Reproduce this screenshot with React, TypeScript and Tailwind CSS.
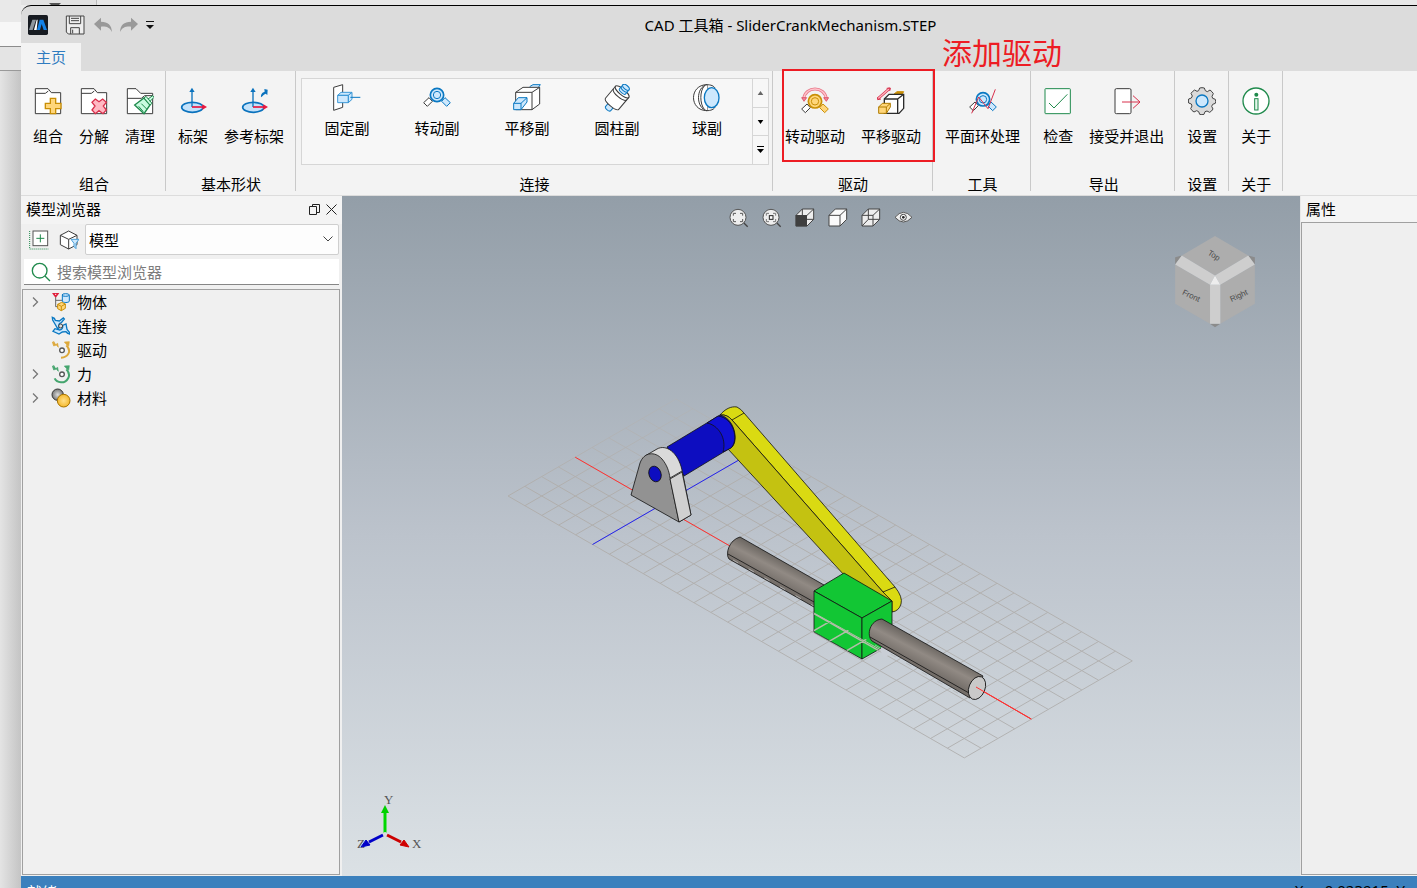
import React from "react";

type IconProps = { children: React.ReactNode; box?: number; className?: string };

function Glyph({ children, box = 84, className = "size-7" }: IconProps) {
  return (
    <svg viewBox={`0 0 ${box} ${box}`} className={className} fill="none" strokeWidth={3} aria-hidden="true">
      {children}
    </svg>
  );
}

const INK = "#3c3c3c";
const BLUE = "#0a78c2";
const SKY = "#cde8fd";
const GREEN = "#1f8a4c";
const ROSE = "#d8304c";
const GOLD = "#c98f06";
const AMBER = "#ffd67a";

function Folder() {
  return (
    <>
      <path d="M4 80V5H42L52 17H80V80Z" fill="#fff" stroke={INK} />
      <path d="M4 19H34L43 12" stroke={INK} />
    </>
  );
}

const combineIcon = (
  <Glyph>
    <Folder />
    <path d="M49 34H65V49H81V65H65V80H49V65H34V49H49Z" fill={AMBER} stroke={GOLD} strokeWidth="4" />
  </Glyph>
);

const explodeIcon = (
  <Glyph>
    <Folder />
    <path d="M46 36L57 44L68 36L79 46L70 57L79 69L69 80L57 71L46 80L36 69L45 57L36 46Z" fill="#ffb9c3" stroke={ROSE} strokeWidth="4" />
  </Glyph>
);

const cleanIcon = (
  <Glyph>
    <path d="M4 80V5H30L44 19H80V80Z" fill="#fff" stroke={INK} />
    <path d="M4 34H46L56 26H80" stroke={INK} />
    <path d="M26 54L54 33L72 54L54 80Z" fill="#c9fbe0" stroke={GREEN} strokeWidth="4" />
    <path d="M54 33L60 28L78 49L72 54ZM66 36L80 26L84 31L72 43" fill="#c9fbe0" stroke={GREEN} />
    <path d="M38 58L52 74M46 50L62 66" stroke={GREEN} />
  </Glyph>
);

function FrameBase() {
  return (
    <>
      <ellipse cx="40" cy="61" rx="32" ry="15" fill="#c4e2fa" stroke="#0a72bd" strokeWidth="5" />
      <path d="M39 60V12" stroke="#0a72bd" strokeWidth="4" />
      <path d="M39 2L47 15H31Z" fill="#0a72bd" />
      <path d="M39 60H72" stroke="#e9173f" strokeWidth="5" />
      <path d="M70 52L84 60L70 68Z" fill="#e9173f" />
    </>
  );
}

const frameIcon = <Glyph><FrameBase /></Glyph>;
const refFrameIcon = (
  <Glyph>
    <FrameBase />
    <path d="M63 31C62 20 68 16 74 14L73 6L83 8L82 24L77 20C70 23 70 26 63 31Z" fill="#0a72bd" />
  </Glyph>
);

const fixedIcon = (
  <Glyph>
    <path d="M2 10L29 2V70L2 79Z" fill="#fff" stroke={INK} />
    <path d="M14 34L24 25H57L46 34Z M46 34L57 25V46L46 56Z M14 34H46V56H14Z" fill={SKY} stroke="#3d98d6" />
    <path d="M52 40H82" stroke={BLUE} />
  </Glyph>
);

function Hinge({ ring, tint }: { ring: string; tint: string }) {
  return (
    <>
      <path d="M2 56L18 41L28 52L13 67Z" fill="#fff" stroke={INK} />
      <path d="M82 56L66 41L56 52L71 67Z" fill={tint} stroke={ring} />
      <circle cx="42" cy="33" r="20" fill={tint} stroke={ring} strokeWidth="5" />
      <circle cx="42" cy="33" r="11" fill={tint} stroke={ring} />
    </>
  );
}

const hingeIcon = <Glyph><Hinge ring={BLUE} tint={SKY} /></Glyph>;

const slideIcon = (
  <Glyph>
    <path d="M50 8L60 2H82L76 10" fill={SKY} stroke={BLUE} />
    <path d="M8 25L30 10H80V60L57 77H8Z" fill="#fff" stroke={INK} />
    <path d="M8 25H57V77M57 25L80 10" stroke={INK} />
    <path d="M2 58L16 41H42V54L24 77H2Z" fill={SKY} stroke={BLUE} />
    <path d="M2 58H24V77M24 58L42 41" stroke={BLUE} />
  </Glyph>
);

const cylinderIcon = (
  <Glyph>
    <g transform="rotate(40 42 42)">
      <path d="M32 62V83C32 90 52 90 52 83V62Z" fill={SKY} stroke={BLUE} />
      <path d="M16 18V64C16 76 68 76 68 64V18Z" fill="#fff" stroke={INK} />
      <ellipse cx="42" cy="18" rx="26" ry="9" fill="#fff" stroke={INK} />
      <path d="M16 28C20 40 64 40 68 28" stroke={INK} />
      <path d="M30 0V16C30 23 54 23 54 16V0Z" fill={SKY} stroke={BLUE} />
      <ellipse cx="42" cy="0" rx="12" ry="6" fill={SKY} stroke={BLUE} />
      <path d="M30 8C32 15 52 15 54 8" stroke={BLUE} />
    </g>
  </Glyph>
);

const ballIcon = (
  <Glyph>
    <path d="M42 2C-12 2 -12 80 42 80Z" fill="#fff" stroke={INK} />
    <path d="M42 2C8 8 8 74 42 80" fill="#fff" stroke={INK} />
    <path d="M40 2C55 2 62 6 66 12M40 80C55 80 62 76 66 70" stroke={INK} />
    <ellipse cx="56" cy="41" rx="22" ry="30" fill={SKY} stroke={BLUE} strokeWidth="4" />
    <path d="M34 6C20 20 20 60 34 76" stroke={INK} />
  </Glyph>
);

const rotaryDriveIcon = (
  <Glyph>
    <path d="M8 36C12 -4 72 -4 76 36" stroke="#e8798a" strokeWidth="9" />
    <path d="M8 36C12 -4 72 -4 76 36" stroke="#ffc4cc" strokeWidth="4" />
    <path d="M2 32H17L9 43ZM68 32H83L76 43Z" fill="#f08b9a" stroke={ROSE} strokeWidth="2" />
    <g transform="translate(0 10)"><Hinge ring={GOLD} tint={AMBER} /></g>
  </Glyph>
);

const linearDriveIcon = (
  <Glyph>
    <path d="M50 22L60 14H80L74 24" fill={GOLD} stroke={GOLD} />
    <path d="M22 36L36 22H80V64L66 79H22Z" fill="#fff" stroke="#2c2c2c" strokeWidth="4" />
    <path d="M22 36H62V79M62 36L80 22" stroke="#2c2c2c" strokeWidth="4" />
    <path d="M5 60L16 49H40V60L28 79H5Z" fill={AMBER} stroke="#b07c00" />
    <path d="M5 60H28V79M28 60L40 49" stroke="#b07c00" />
    <path d="M5 33L36 6" stroke={ROSE} strokeWidth="8" strokeLinecap="round" />
    <path d="M5 33L36 6" stroke="#ffb4be" strokeWidth="4" strokeLinecap="round" />
    <path d="M0 30L2 38L12 36M29 4L40 3L38 12" stroke={ROSE} />
  </Glyph>
);

const loopIcon = (
  <Glyph>
    <g transform="translate(0 4)"><Hinge ring={BLUE} tint={SKY} /></g>
    <path d="M8 79L29 30L57 65L79 7" stroke={ROSE} />
  </Glyph>
);

const checkIcon = (
  <Glyph>
    <rect x="3" y="5" width="76" height="75" rx="2" fill="#fff" stroke={GREEN} />
    <path d="M15 48L30 63L70 22" stroke={GREEN} />
  </Glyph>
);

const exitIcon = (
  <Glyph>
    <rect x="6" y="5" width="48" height="75" rx="4" fill="#fff" stroke={INK} />
    <path d="M27 45H81M60 26L81 45L60 64" stroke={ROSE} />
  </Glyph>
);

const gearIcon = (
  <Glyph>
    <path
      d="M32 11L35 3Q42 1 49 3L52 11L58 14L66 9Q73 14 76 20L72 28L74 34L82 37Q84 43 82 49L74 52L71 58L75 66Q71 73 65 76L57 72L51 74L48 82Q42 84 35 82L32 74L26 71L18 75Q11 71 8 65L12 57L10 51L2 48Q0 42 2 36L10 33L13 27L9 19Q14 12 20 9L27 13Z"
      fill="#dadada"
      stroke="#444"
    />
    <circle cx="42" cy="42" r="18" fill={SKY} stroke={BLUE} strokeWidth="4" />
  </Glyph>
);

const infoIcon = (
  <Glyph>
    <circle cx="42" cy="42" r="39" fill="#fff" stroke={GREEN} strokeWidth="4" />
    <circle cx="43" cy="23" r="6" fill={GREEN} />
    <rect x="38" y="35" width="10" height="34" fill="#e4f7ec" stroke={GREEN} />
  </Glyph>
);

function RibbonGroup({ label, children, tight }: { label: string; children: React.ReactNode; tight?: boolean }) {
  return (
    <section aria-label={label} className={`relative flex shrink-0 flex-col pb-px pl-1 ${tight ? "pr-[3px]" : "pr-1"}`}>
      <div className="flex flex-1">{children}</div>
      <div className="h-5 text-center leading-5">{label}</div>
      <span className="absolute top-0 right-0 bottom-1 w-px bg-[#c9c9c9]" />
    </section>
  );
}

function RibbonButton({ icon, label }: { icon: React.ReactNode; label: string }) {
  return (
    <button type="button" className="flex flex-col items-center gap-[11px] self-start px-2 pt-4 leading-5 whitespace-nowrap">
      {icon}
      <span>{label}</span>
    </button>
  );
}

const joints = [
  { label: "固定副", icon: fixedIcon },
  { label: "转动副", icon: hingeIcon },
  { label: "平移副", icon: slideIcon },
  { label: "圆柱副", icon: cylinderIcon },
  { label: "球副", icon: ballIcon },
];

function Gallery() {
  return (
    <div className="mt-[7px] ml-px flex h-[87px] w-[468px] border border-[#d6d6d6] bg-[#f7f7f7]">
      <div className="flex flex-1 items-start">
        {joints.map((j) => (
          <button key={j.label} type="button" className="flex w-[90px] flex-col items-center gap-1.5 pt-[5px] leading-5">
            {j.icon}
            <span>{j.label}</span>
          </button>
        ))}
      </div>
      <div className="flex w-[18px] flex-col divide-y divide-[#d6d6d6] border-l border-[#d6d6d6]">
        <button type="button" aria-label="向上滚动" className="flex flex-1 items-center justify-center">
          <svg viewBox="0 0 7 5" className="h-1 w-[7px]"><path d="M0 5L3.500 0L7 5Z" fill="#666" /></svg>
        </button>
        <button type="button" aria-label="向下滚动" className="flex flex-1 items-center justify-center">
          <svg viewBox="0 0 7 5" className="h-1 w-[7px]"><path d="M0 0L3.500 5L7 0Z" fill="#000" /></svg>
        </button>
        <button type="button" aria-label="展开" className="flex flex-1 items-center justify-center">
          <svg viewBox="0 0 7 8" className="h-2 w-[7px]"><path d="M0 0H7V1H0ZM0 3L3.500 7L7 3Z" fill="#000" /></svg>
        </button>
      </div>
    </div>
  );
}

function TitleBar() {
  return (
    <header className="flex h-[37px] shrink-0 items-center pl-[7px]">
      <svg viewBox="0 0 60 60" className="size-5 shrink-0" aria-hidden="true">
        <rect width="60" height="60" rx="5" fill="#171b21" />
        <path d="M3 45L13 14H24L14 45Z" fill="#8e969d" />
        <path d="M18 45L26 14H29L26 45Z" fill="#fff" />
        <path d="M27 45L35 14H46L57 45H47L41 27L36 45Z" fill="#1382e8" />
      </svg>
      <div className="ml-4 flex items-center gap-1">
        <button type="button" aria-label="保存" className="flex size-[22px] items-center justify-center">
          <svg viewBox="0 0 60 60" className="size-5" fill="none" stroke="#444" strokeWidth="3">
            <path d="M4 3H57V57H10L4 51Z" fill="#eee" />
            <path d="M13 3V26H47V3M18 10H42M18 17H42M17 57V38H43V57M23 44V55" />
          </svg>
        </button>
        <button type="button" aria-label="撤销" className="ml-0.5 flex size-[22px] items-center justify-center">
          <svg viewBox="0 0 60 48" className="h-4 w-5"><path d="M3 21L24 2V14C45 14 56 24 57 45C49 31 41 28 24 29V41Z" fill="#999" /></svg>
        </button>
        <button type="button" aria-label="重做" className="flex size-[22px] items-center justify-center">
          <svg viewBox="0 0 60 48" className="h-4 w-5"><path d="M57 21L36 2V14C15 14 4 24 3 45C11 31 19 28 36 29V41Z" fill="#999" /></svg>
        </button>
        <button type="button" aria-label="自定义快速访问工具栏" className="flex w-3 items-center justify-center">
          <svg viewBox="0 0 8 8" className="size-2"><path d="M0 0H8V1H0ZM0 4L4 8L8 4Z" fill="#111" /></svg>
        </button>
      </div>
      <h1 className="flex-1 pl-2 text-center leading-5">CAD 工具箱 - SliderCrankMechanism.STEP</h1>
    </header>
  );
}

function Ribbon() {
  return (
    <div className="flex h-[125px] shrink-0 border-b border-[#dcdcdc] bg-[#f3f3f3]">
      <RibbonGroup label="组合" tight>
        <RibbonButton icon={combineIcon} label="组合" />
        <RibbonButton icon={explodeIcon} label="分解" />
        <RibbonButton icon={cleanIcon} label="清理" />
      </RibbonGroup>
      <RibbonGroup label="基本形状">
        <RibbonButton icon={frameIcon} label="标架" />
        <RibbonButton icon={refFrameIcon} label="参考标架" />
      </RibbonGroup>
      <RibbonGroup label="连接">
        <Gallery />
      </RibbonGroup>
      <RibbonGroup label="驱动">
        <RibbonButton icon={rotaryDriveIcon} label="转动驱动" />
        <RibbonButton icon={linearDriveIcon} label="平移驱动" />
        <span className="pointer-events-none absolute -top-0.5 -right-0.5 left-[9px] z-10 h-[93px] border-2 border-[#ed1c24]" />
        <span className="pointer-events-none absolute -top-9 left-[169px] z-10 text-[30px] leading-9 whitespace-nowrap text-[#ed1c24]">添加驱动</span>
      </RibbonGroup>
      <RibbonGroup label="工具" tight>
        <RibbonButton icon={loopIcon} label="平面环处理" />
      </RibbonGroup>
      <RibbonGroup label="导出" tight>
        <RibbonButton icon={checkIcon} label="检查" />
        <RibbonButton icon={exitIcon} label="接受并退出" />
      </RibbonGroup>
      <RibbonGroup label="设置">
        <RibbonButton icon={gearIcon} label="设置" />
      </RibbonGroup>
      <RibbonGroup label="关于">
        <RibbonButton icon={infoIcon} label="关于" />
      </RibbonGroup>
    </div>
  );
}

const bodyIcon = (
  <Glyph box={60} className="size-5">
    <path d="M3 3H25L14 18Z" fill="#e0203c" />
    <circle cx="14" cy="7" r="2" fill="#fff" />
    <path d="M14 16V44H22M14 25H34" stroke="#666" />
    <path d="M34 10V27C34 33 55 33 55 27V10Z" fill={SKY} stroke={BLUE} />
    <ellipse cx="44" cy="9" rx="11" ry="4" fill={SKY} stroke={BLUE} />
    <path d="M20 37L32 31L43 36V49L31 56L20 50Z" fill={AMBER} stroke={GOLD} />
    <path d="M20 37L31 43L43 36M31 43V56" stroke={GOLD} />
  </Glyph>
);

const linkIcon = (
  <Glyph box={60} className="size-5">
    <path d="M4 4L10 7L13 13L25 15L37 6L40 9L31 20C24 22 22 28 24 36L20 38L12 24L5 12Z" fill={SKY} stroke={BLUE} strokeWidth="4" />
    <path d="M55 54L50 52L45 47L34 48L24 54L6 46L12 38L26 42C34 40 36 34 35 28L45 24L48 40L55 49Z" fill={SKY} stroke={BLUE} strokeWidth="4" />
    <circle cx="29" cy="30" r="6" fill="#ddd" stroke="#444" />
  </Glyph>
);

function ArcArrow({ color, full }: { color: string; full?: boolean }) {
  return (
    <Glyph box={60} className="size-5">
      <circle cx="33" cy="31" r="7" fill="#fff" stroke="#555" strokeWidth="4" />
      <path d={full ? "M46 16C64 34 48 56 30 55C20 54 14 50 11 43" : "M46 16C64 34 50 52 30 53"} stroke={color} strokeWidth="6" />
      <path d="M40 6L55 5L53 19L47 14ZM8 4V9L14 14L4 6L8 18L16 15L22 22L20 10L14 14Z" fill={color} stroke={color} strokeWidth="2" />
    </Glyph>
  );
}

const materialIcon = (
  <Glyph box={60} className="size-5">
    <defs>
      <radialGradient id="steel"><stop offset="0" stopColor="#ddd" /><stop offset="1" stopColor="#777" /></radialGradient>
      <radialGradient id="brass"><stop offset="0" stopColor="#ffe08a" /><stop offset="1" stopColor="#f5b92e" /></radialGradient>
    </defs>
    <circle cx="20" cy="20" r="17" fill="url(#steel)" stroke="#333" />
    <circle cx="38" cy="38" r="19" fill="url(#brass)" stroke="#a87400" />
  </Glyph>
);

const treeItems = [
  { label: "物体", icon: bodyIcon, expandable: true },
  { label: "连接", icon: linkIcon, expandable: false },
  { label: "驱动", icon: <ArcArrow color="#dda83a" />, expandable: false },
  { label: "力", icon: <ArcArrow color="#45a56e" full />, expandable: true },
  { label: "材料", icon: materialIcon, expandable: true },
];

function ModelBrowser() {
  return (
    <aside className="flex w-[321px] shrink-0 flex-col bg-[#f0f0f0]">
      <div className="flex h-7 shrink-0 items-center bg-[#f4f4f4] pr-[3px] pb-0.5 pl-[5px] leading-5">
        <h2 className="flex-1">模型浏览器</h2>
        <button type="button" aria-label="浮动" className="flex size-4 items-center justify-center">
          <svg viewBox="0 0 11 11" className="size-[11px]" fill="none" stroke="#222"><path d="M.5 2.500H7.500V10.500H.5ZM3.500 2.500V.5H10.500V8.500H7.500" /></svg>
        </button>
        <button type="button" aria-label="关闭" className="ml-px flex size-4 items-center justify-center">
          <svg viewBox="0 0 11 11" className="size-[11px]" fill="none" stroke="#222"><path d="M.5 .5L10.500 10.500M10.500 .5L.5 10.500" /></svg>
        </button>
      </div>
      <div className="flex h-[31px] shrink-0 items-center gap-2 pr-[3px] pl-2">
        <button type="button" aria-label="展开全部">
          <svg viewBox="0 0 60 60" className="size-5" fill="none" strokeWidth="3">
            <rect x="12" y="3" width="44" height="44" fill="#fff" stroke="#555" />
            <path d="M34 13V37M22 25H46" stroke={GREEN} />
            <path d="M2 3V57H58" stroke={GREEN} strokeDasharray="3 3" />
          </svg>
        </button>
        <button type="button" aria-label="筛选" className="ml-0.5">
          <svg viewBox="0 0 60 60" className="size-5" fill="none" strokeWidth="3">
            <path d="M4 16L29 3L54 16V44L29 57L4 44Z" fill="#fff" stroke={INK} />
            <path d="M4 16L29 28L54 16M29 28V57" stroke={INK} />
            <path d="M36 28H60L51 40V56L45 50V40Z" fill={SKY} stroke="#4a9fd8" />
          </svg>
        </button>
        <div className="relative -ml-0.5 h-[31px] flex-1">
          <select aria-label="视图" defaultValue="模型" className="h-full w-full appearance-none rounded-xs border border-[#cfcfcf] bg-[#fdfdfd] pl-[3px] leading-5">
            <option>模型</option>
          </select>
          <svg viewBox="0 0 10 6" className="pointer-events-none absolute top-3 right-[6px] h-1.5 w-2.5" fill="none" stroke="#444"><path d="M.5 .5L5 5L9.500 .5" /></svg>
        </div>
      </div>
      <label className="mx-[3px] mt-1 flex h-[26px] shrink-0 items-center border-b border-[#868686] bg-white pl-[7px]">
        <svg viewBox="0 0 60 60" className="size-5" fill="none" stroke={GREEN} strokeWidth="4"><circle cx="26" cy="26" r="22" /><path d="M42 42L57 57" /></svg>
        <input aria-label="搜索模型浏览器" placeholder="搜索模型浏览器" className="ml-[6px] min-w-0 flex-1 bg-transparent leading-5 outline-none placeholder:text-[#7c7c7c]" />
      </label>
      <ul role="tree" className="mt-1 mr-0.5 mb-px ml-px flex-1 border border-[#a0a0a0]">
        {treeItems.map((item) => (
          <li key={item.label} role="treeitem" aria-label={item.label} className="flex h-6 items-center pl-[9px] leading-5">
            <span className="flex w-[19px] items-center">
              {item.expandable && (
                <svg viewBox="0 0 7 10" className="h-2.5 w-[7px]" fill="none" stroke="#777" strokeWidth="1.300"><path d="M1 .5L5.500 5L1 9.500" /></svg>
              )}
            </span>
            {item.icon}
            <span className="ml-[6px]">{item.label}</span>
          </li>
        ))}
      </ul>
    </aside>
  );
}

const ORIGIN = { x: 508, y: 496 };
const U = { x: 16.9, y: 9.7 };
const V = { x: 16.8, y: -9.7 };
const at = (u: number, v: number) => `${(ORIGIN.x + u * U.x + v * V.x).toFixed(1)} ${(ORIGIN.y + u * U.y + v * V.y).toFixed(1)}`;
const gridPath = [
  ...Array.from({ length: 28 }, (_, i) => `M${at(i, 0)}L${at(i, 10)}`),
  ...Array.from({ length: 11 }, (_, i) => `M${at(0, i)}L${at(27, i)}`),
].join("");

function Scene() {
  return (
    <svg viewBox="342 196 958 680" className="absolute inset-0 size-full" fill="none" role="img" aria-label="曲柄滑块机构">
      <defs>
        <linearGradient id="rodSkin" x1="931" y1="646" x2="920" y2="667" gradientUnits="userSpaceOnUse">
          <stop offset="0" stopColor="#6d6863" /><stop offset="0.450" stopColor="#918a84" /><stop offset="1" stopColor="#746e69" />
        </linearGradient>
        <linearGradient id="rodSkinFar" x1="782" y1="560" x2="771" y2="581" gradientUnits="userSpaceOnUse">
          <stop offset="0" stopColor="#6d6863" /><stop offset="0.450" stopColor="#918a84" /><stop offset="1" stopColor="#746e69" />
        </linearGradient>
        <linearGradient id="gridFade" x1="0" y1="400" x2="0" y2="700" gradientUnits="userSpaceOnUse">
          <stop offset="0" stopColor="#b2b2b2" stopOpacity="0.500" /><stop offset="0.300" stopColor="#b0aeac" /><stop offset="1" stopColor="#b2b2b2" />
        </linearGradient>
        <clipPath id="sunk"><path d="M814 613L883 648L862 659L814 632Z" /></clipPath>
      </defs>
      <path d={gridPath} stroke="url(#gridFade)" />
      <path d={`M${at(5, 0)}L${at(5, 10)}`} stroke="#2222f0" />
      <path d={`M${at(0, 4)}L${at(27, 4)}`} stroke="#ff3030" />

      <g stroke="#111" strokeWidth="0.800" strokeLinejoin="round">
        <path d="M740 537L824 585L814 607L729 559C725 554 729 540 740 537Z" fill="url(#rodSkinFar)" />
        <path d="M728 554L814 602" />
        <path d="M733 560L814 606" stroke="#b8b8b8" strokeDasharray="6 12" />

        <path d="M720 415C725 409 731 406 737 407Q741 409 744 413L895 587Q903 597 901 604Q899 611 892 612L883 592L732 420Q727 414 720 415Z" fill="#dada12" />
        <path d="M720 415Q727 414 732 420L883 592L892 601V612L845 576L728 449Z" fill="#c4c211" />
        <path d="M732 420L744 413M883 592L895 587" />

        <path d="M667 447L720 415C734 418 739 440 732 447L684 476Z" fill="#0d0dc0" />
        <path d="M707 423L718 416C734 418 739 440 731 448L723 452C727 438 718 425 707 423Z" fill="#1010d2" />

        <path d="M645 456L657 449C666 444 678 452 682 470L691 515L679 522Z" fill="#dadada" />
        <path d="M631 495L640 463C644 452 655 451 662 459C667 465 669 471 670 478L679 522Z" fill="#929292" />
        <path d="M670 478L682 471" />
        <path d="M682 472L691 515L679 522L670 479Z" fill="#d0d0d0" />
        <ellipse cx="655" cy="474" rx="6" ry="8" fill="#0d0dc0" transform="rotate(-20 655 474)" />

        <path d="M844 573L892 601L862 618L814 591Z" fill="#12c634" />
        <path d="M814 591L862 618V659L814 632Z" fill="#12c634" />
        <path d="M862 618L892 601V642L862 659Z" fill="#12c634" />
      </g>
      <path d={gridPath} stroke="#b4bda9" strokeWidth="1.500" clipPath="url(#sunk)" />
      <path d="M814 613L881 650" stroke="#b4bda9" />
      <path d="M893 624L896 650L884 658L880 650Z" fill="#c9ced6" />
      <g stroke="#111" strokeWidth="0.800" strokeLinejoin="round">
        <path d="M882 619L983 676L970 698L872 641C866 635 870 620 882 619Z" fill="url(#rodSkin)" />
        <path d="M870 637L969 693" />
        <path d="M875 645L966 698" stroke="#b8b8b8" strokeDasharray="6 12" />
        <ellipse cx="977" cy="688" rx="8" ry="12" fill="#c9c9c9" transform="rotate(22 977 688)" />
      </g>
      <path d="M976 687L1031 719" stroke="#ff3030" />
    </svg>
  );
}

function ViewCube() {
  return (
    <svg viewBox="42 118 246 280" className="absolute top-[39px] right-[44px] h-[93px] w-[82px]" role="img" aria-label="视图方向">
      <path d="M45 185L65 180L45 207ZM285 185L265 180L285 207ZM150 385H181L165 396Z" fill="#8b8b8b" />
      <path d="M165 121L265 180L165 240L65 180ZM45 207L150 268V385L45 325ZM181 268L285 207V325L181 385Z" fill="#adadad" />
      <path d="M65 180L165 240L150 268L45 207ZM265 180L165 240L181 268L285 207ZM150 268H181V385H150Z" fill="#cecece" />
      <path d="M165 240L181 268H150Z" fill="#ededed" />
      <g className="font-['Liberation_Sans']" fontSize="24" fill="#484848" textAnchor="middle">
        <text transform="translate(158 186) rotate(32)">Top</text>
        <text transform="translate(90 308) rotate(25)">Front</text>
        <text transform="translate(240 308) rotate(-25)">Right</text>
      </g>
    </svg>
  );
}

function AxisTriad() {
  return (
    <svg viewBox="0 0 66 60" className="absolute bottom-[23px] left-[14px] h-[60px] w-[66px]" role="img" aria-label="坐标轴">
      <g className="font-['Liberation_Serif',serif]" fontSize="13" fill="#555">
        <text x="28" y="11">Y</text>
        <text x="1" y="55">Z</text>
        <text x="56" y="55">X</text>
      </g>
      <path d="M29 40V20" stroke="#00d800" strokeWidth="3" />
      <path d="M29 12L33 20H25Z" fill="#00d000" />
      <path d="M27 42L13 49" stroke="#0000c8" strokeWidth="3" />
      <path d="M5 54L10 47L14 52Z" fill="#0000c8" stroke="#0000c8" />
      <path d="M31 42L45 49" stroke="#cc0000" strokeWidth="3" />
      <path d="M53 54L48 47L44 52Z" fill="#d00000" stroke="#d00000" />
      <circle cx="29" cy="41" r="2" fill="#ddd" />
    </svg>
  );
}

const viewTools = [
  {
    label: "缩放至全部",
    art: (
      <>
        <path d="M44 44L56 56" stroke="#444" strokeWidth="4" />
        <circle cx="27" cy="28" r="24" fill="#eee" stroke="#555" />
        <path d="M13 23V16H21M33 16H41V23M41 33V41H33M21 41H13V33" stroke="#555" />
      </>
    ),
  },
  {
    label: "缩放至所选",
    art: (
      <>
        <path d="M44 44L56 56" stroke="#444" strokeWidth="4" />
        <circle cx="27" cy="28" r="24" fill="#eee" stroke="#555" />
        <path d="M13 23V16H21M33 16H41V23M41 33V41H33M21 41H13V33" stroke="#777" />
        <rect x="22" y="23" width="11" height="11" fill="#fff" stroke="#222" strokeWidth="3" />
      </>
    ),
  },
  {
    label: "着色",
    art: (
      <>
        <path d="M3 22L22 3H56V34L36 54H3Z" fill="#eee" stroke="#444" />
        <path d="M36 22L56 3M22 3V22M36 34H56" stroke="#444" />
        <rect x="2" y="21" width="34" height="34" fill="#3f3f3f" />
      </>
    ),
  },
  {
    label: "带边着色",
    art: (
      <>
        <path d="M3 22L22 3H56V34L36 54H3Z" fill="#fafafa" stroke="#444" />
        <path d="M3 22H36V54M36 22L56 3" stroke="#444" />
      </>
    ),
  },
  {
    label: "线框",
    art: (
      <>
        <path d="M3 22L22 3H56V34L36 54H3Z" fill="#eee" stroke="#444" />
        <path d="M3 22H36V54M36 22L56 3M22 3V34H56M22 34L3 54" stroke="#444" />
      </>
    ),
  },
  {
    label: "可见性",
    art: (
      <>
        <path d="M3 28Q28 -2 54 28Q28 56 3 28Z" fill="#eee" stroke="#555" />
        <circle cx="28" cy="28" r="9" fill="#fff" stroke="#444" />
        <circle cx="28" cy="28" r="4" fill="#222" />
      </>
    ),
  },
];

function Viewport() {
  return (
    <main className="relative min-w-0 flex-1 bg-linear-to-b from-[#939ea8] via-[#bcc3cc] to-[#dbe1e5]">
      <Scene />
      <div className="absolute inset-x-0 top-3 flex justify-center gap-[13px]">
        {viewTools.map((tool) => (
          <button key={tool.label} type="button" aria-label={tool.label} className="size-5">
            <Glyph box={60} className="size-5">{tool.art}</Glyph>
          </button>
        ))}
      </div>
      <ViewCube />
      <AxisTriad />
    </main>
  );
}

export default function App() {
  return (
    <div className="flex h-screen overflow-hidden bg-[#ececec] font-['Noto_Sans','Noto_Sans_CJK_SC',sans-serif] text-[15px] text-black">
      <div className="flex w-[21px] shrink-0 flex-col bg-linear-to-r from-[#e4e4e4] to-[#c4c4c4]">
        <div className="h-[22px] bg-[#e9e9e9]" />
        <div className="h-[25px] border-b border-[#8c8c8c] bg-[#f7f7f7]" />
        <div className="h-6 border-b border-[#999] bg-[#e4e4e4]" />
      </div>
      <div className="flex min-w-0 flex-1 flex-col">
        <div className="flex h-[5px] shrink-0 items-end bg-[#e8e8e8]">
          <div className="flex h-full w-[76px] items-end border-r border-[#bbb] bg-[#e2e2e2] pl-7">
            <svg viewBox="0 0 12 2" className="h-0.5 w-3"><path d="M0 0H12L10 2H2Z" fill="#555" /></svg>
          </div>
        </div>
        <div className="flex min-h-0 flex-1 flex-col rounded-tl-[10px] border-t border-black bg-[#dcdcdc]">
          <TitleBar />
          <nav className="flex h-7 shrink-0">
            <a href="#home" className="bg-[#f3f3f3] px-[15px] leading-7 text-[#2f7cc0]">主页</a>
          </nav>
          <Ribbon />
          <div className="flex min-h-0 flex-1">
            <ModelBrowser />
            <Viewport />
            <aside className="flex w-[117px] shrink-0 flex-col border-l border-[#e8e8e8] bg-[#f4f4f4]">
              <h2 className="h-[26px] pl-[5px] leading-[27px]">属性</h2>
              <div className="mb-px flex-1 border border-r-0 border-[#a0a0a0] bg-[#efefef]" />
            </aside>
          </div>
          <footer className="flex h-3 shrink-0 justify-between overflow-hidden bg-[#3b80bd] pt-1.5 pr-3 pl-1.5 leading-5">
            <span className="text-white">就绪</span>
            <span className="leading-4 whitespace-pre">X = -0.023915  Y</span>
          </footer>
        </div>
      </div>
    </div>
  );
}
